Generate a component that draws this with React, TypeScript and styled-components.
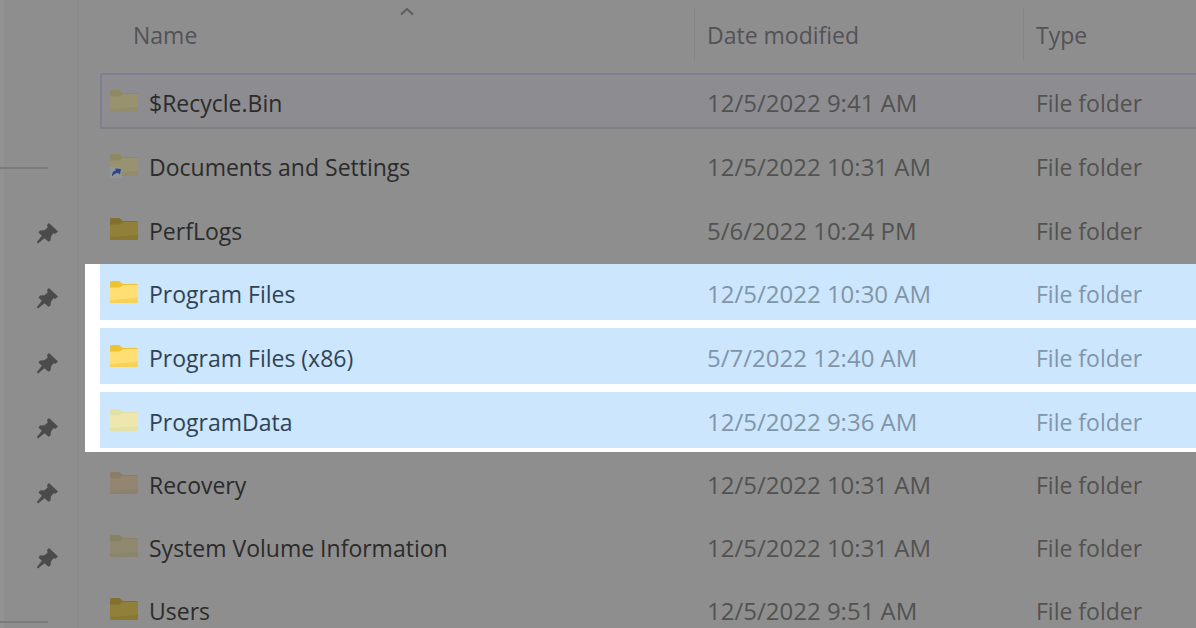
import React from 'react';
import styled, { createGlobalStyle, css } from 'styled-components';

const GlobalStyle = createGlobalStyle`
  * { box-sizing: border-box; }
  body {
    margin: 0;
    background: #8e8e8e;
    font-family: "Open Sans", "Noto Sans", sans-serif;
  }
`;

type FolderTone = 'hidden' | 'warm' | 'olive' | 'normal' | 'bright' | 'pale';

const tones: Record<FolderTone, { back: string; front: string; edge: string }> = {
  hidden: { back: '#8f8861', front: '#999270', edge: '#938c68' },
  warm: { back: '#8a7e66', front: '#928670', edge: '#8c816b' },
  olive: { back: '#87825f', front: '#8e896f', edge: '#8a856a' },
  normal: { back: '#83702c', front: '#918039', edge: '#8a7730' },
  bright: { back: '#edc233', front: '#ffdf73', edge: '#f7d257' },
  pale: { back: '#e2e0a6', front: '#ede7ad', edge: '#e5e2a9' },
};

const Window = styled.div`
  display: flex;
  height: 100vh;
  overflow: hidden;
`;

const Sidebar = styled.nav`
  flex: none;
  width: 79px;
  padding-top: 167px;
  border-left: 4px solid #929292;
  border-right: 2px solid #898989;
`;

const Rule = styled.hr`
  width: 48px;
  height: 2px;
  margin: 0 0 0 -4px;
  border: 0;
  background: #7b7b7b;
`;

const PinList = styled.ul`
  display: flex;
  flex-direction: column;
  gap: 41px;
  margin: 0;
  padding: 52px 0 51px 31px;
  list-style: none;
`;

const PinItem = styled.li`
  height: 24px;
`;

const PinButton = styled.button`
  display: block;
  padding: 0;
  border: 0;
  background: none;
`;

const Files = styled.main`
  flex: 1;
  min-width: 0;
  padding-left: 6px;
`;

const FileTable = styled.table`
  display: block;
`;

const columns = css`
  display: grid;
  grid-template-columns: minmax(0, 594fr) minmax(0, 329fr) minmax(0, 173fr);
`;

const Head = styled.thead`
  display: block;
  padding-left: 15px;
`;

const HeadRow = styled.tr`
  ${columns}
  height: 73px;
  padding: 7px 0 12px;
`;

const HeadCell = styled.th<{ $first?: boolean }>`
  display: flex;
  flex-direction: column;
  align-items: flex-start;
  justify-content: flex-end;
  padding: 0 0 11px ${p => (p.$first ? 33 : 12)}px;
  border-left: ${p => (p.$first ? 'none' : '1px solid #858585')};
`;

const SortButton = styled.button`
  padding: 0;
  border: 0;
  background: none;
  color: #525257;
  font: 400 23px/30px "Open Sans", "Noto Sans", sans-serif;
`;

const SortArrow = styled.svg`
  display: block;
  align-self: center;
  margin: 0 13px 4px 0;
`;

const Group = styled.tbody<{ $lit?: boolean }>`
  display: flex;
  flex-direction: column;
  gap: 8px;
  padding-left: 15px;
  ${p => p.$lit && css`
    margin: 7px 0 3px;
    padding-bottom: 4px;
    background: #ffffff;
  `}
  &:last-child {
    gap: 7px;
  }
`;

const Row = styled.tr<{ $lit?: boolean; $focused?: boolean }>`
  ${columns}
  height: 56px;
  background: ${p => (p.$lit ? '#cce6fd' : p.$focused ? '#8d8d91' : 'transparent')};
  box-shadow: ${p => (p.$focused ? 'inset 2px 2px #7f7f92, inset 0 -2px #7f7f86' : 'none')};
  color: ${p => (p.$lit ? '#2f4357' : '#2b2b2b')};
`;

const NameCell = styled.td`
  display: flex;
  align-items: center;
  gap: 10px;
  padding: 0 0 0 9px;
  font-size: 23px;
  line-height: 32px;
  white-space: nowrap;
`;

const FileName = styled.span`
  padding-top: 4px;
`;

const InfoCell = styled.td<{ $lit?: boolean; $size: number }>`
  display: flex;
  align-items: center;
  padding: 4px 0 0 13px;
  color: ${p => (p.$lit ? '#8195a8' : '#525252')};
  font-size: ${p => p.$size}px;
  line-height: 32px;
  white-space: nowrap;
`;

function Folder({ tone, shortcut }: { tone: FolderTone; shortcut?: boolean }) {
  const c = tones[tone];
  return (
    <svg width="30" height="26" viewBox="0 0 30 26" aria-hidden="true">
      <path d="M1 3.5 Q1 2 2.5 2 H10 L14 5 H27.5 Q29 5 29 6.5 V20 H1 Z" fill={c.back} />
      <path d="M1 8.5 H10.5 L14 6 H29 V22.5 Q29 24 27.5 24 H2.5 Q1 24 1 22.5 Z" fill={c.front} />
      <path d="M1 21 L29 19 V22.5 Q29 24 27.5 24 H2.5 Q1 24 1 22.5 Z" fill={c.edge} />
      {shortcut && (
        <>
          <rect x="1" y="15" width="12" height="11" fill="#92949c" />
          <path d="M3 24.5 C3 20.5 4.5 18.8 7 18.6 L6 16.5 L12 17 L11 22.6 L9.3 21 C6.8 20.8 5 22 3 24.5 Z" fill="#2d4683" />
        </>
      )}
    </svg>
  );
}

function Pin() {
  return (
    <svg width="24" height="24" viewBox="0 0 24 24" aria-hidden="true">
      <path
        d="M14 2 L23 10.5 L20.5 12.8 L18.5 12.3 L16 15.5 L15.5 19.5 L13.5 20.8 L9.5 17.2 L3 22.5 L1.8 21.2 L6.8 14.8 L3.5 11.5 L5 9.6 L9.5 9.2 L12.7 6.4 L12 4 Z"
        fill="#4b4b4b"
      />
    </svg>
  );
}

interface Entry {
  name: string;
  date: string;
  tone: FolderTone;
  shortcut?: boolean;
  focused?: boolean;
}

const groups: { lit?: boolean; entries: Entry[] }[] = [
  {
    entries: [
      { name: '$Recycle.Bin', date: '12/5/2022 9:41 AM', tone: 'hidden', focused: true },
      { name: 'Documents and Settings', date: '12/5/2022 10:31 AM', tone: 'hidden', shortcut: true },
      { name: 'PerfLogs', date: '5/6/2022 10:24 PM', tone: 'normal' },
    ],
  },
  {
    lit: true,
    entries: [
      { name: 'Program Files', date: '12/5/2022 10:30 AM', tone: 'bright' },
      { name: 'Program Files (x86)', date: '5/7/2022 12:40 AM', tone: 'bright' },
      { name: 'ProgramData', date: '12/5/2022 9:36 AM', tone: 'pale' },
    ],
  },
  {
    entries: [
      { name: 'Recovery', date: '12/5/2022 10:31 AM', tone: 'warm' },
      { name: 'System Volume Information', date: '12/5/2022 10:31 AM', tone: 'olive' },
      { name: 'Users', date: '12/5/2022 9:51 AM', tone: 'normal' },
    ],
  },
];

const pins = [1, 2, 3, 4, 5, 6];

export default function App() {
  return (
    <>
      <GlobalStyle />
      <Window>
        <Sidebar aria-label="Quick access">
          <Rule />
          <PinList>
            {pins.map(n => (
              <PinItem key={n}>
                <PinButton type="button" aria-label={`Unpin item ${n}`}><Pin /></PinButton>
              </PinItem>
            ))}
          </PinList>
          <Rule />
        </Sidebar>
        <Files>
          <FileTable>
            <Head>
              <HeadRow>
                <HeadCell scope="col" $first>
                  <SortArrow width="16" height="9" viewBox="0 0 16 9" aria-hidden="true">
                    <path d="M2 7.5 L8 2 L14 7.5" fill="none" stroke="#5c5c5c" strokeWidth="2" />
                  </SortArrow>
                  <SortButton type="button">Name</SortButton>
                </HeadCell>
                <HeadCell scope="col"><SortButton type="button">Date modified</SortButton></HeadCell>
                <HeadCell scope="col"><SortButton type="button">Type</SortButton></HeadCell>
              </HeadRow>
            </Head>
            {groups.map((group, i) => (
              <Group key={i} $lit={group.lit}>
                {group.entries.map(entry => (
                  <Row key={entry.name} $lit={group.lit} $focused={entry.focused}>
                    <NameCell>
                      <Folder tone={entry.tone} shortcut={entry.shortcut} />
                      <FileName>{entry.name}</FileName>
                    </NameCell>
                    <InfoCell $lit={group.lit} $size={24}>{entry.date}</InfoCell>
                    <InfoCell $lit={group.lit} $size={23}>File folder</InfoCell>
                  </Row>
                ))}
              </Group>
            ))}
          </FileTable>
        </Files>
      </Window>
    </>
  );
}
